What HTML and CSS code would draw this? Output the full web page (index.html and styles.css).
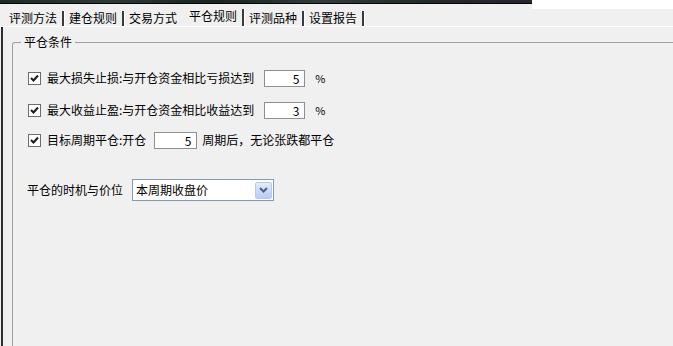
FILE: index.html
```html
<!DOCTYPE html>
<html lang="zh">
<head>
<meta charset="utf-8">
<title>平仓规则</title>
<link rel="stylesheet" href="styles.css">
</head>
<body>
<div class="top">
  <div class="photo"></div>
  <div class="blank"></div>
</div>
<div class="tabs">
  <span class="tab">评测方法</span>
  <span class="tab">建仓规则</span>
  <span class="tab pre-active">交易方式</span>
  <span class="tab active">平仓规则</span>
  <span class="tab">评测品种</span>
  <span class="tab">设置报告</span>
</div>
<div class="tabline"></div>
<div class="panel">
  <fieldset class="group">
    <legend class="legend">平仓条件</legend>
    <div class="rows">
      <div class="row r1">
        <span class="check"><svg width="9" height="9" viewBox="0 0 9 9"><path d="M1 4 L3.5 6.5 L8 1.5" fill="none" stroke="#1a1a1a" stroke-width="2"/></svg></span>
        <span class="label">最大损失止损:与开仓资金相比亏损达到</span>
        <span class="num w41">5</span>
        <span class="pct">%</span>
      </div>
      <div class="row r2">
        <span class="check"><svg width="9" height="9" viewBox="0 0 9 9"><path d="M1 4 L3.5 6.5 L8 1.5" fill="none" stroke="#1a1a1a" stroke-width="2"/></svg></span>
        <span class="label">最大收益止盈:与开仓资金相比收益达到</span>
        <span class="num w41">3</span>
        <span class="pct">%</span>
      </div>
      <div class="row r3">
        <span class="check"><svg width="9" height="9" viewBox="0 0 9 9"><path d="M1 4 L3.5 6.5 L8 1.5" fill="none" stroke="#1a1a1a" stroke-width="2"/></svg></span>
        <span class="label">目标周期平仓:开仓</span>
        <span class="num w43">5</span>
        <span class="after">周期后，无论张跌都平仓</span>
      </div>
      <div class="row r4">
        <span class="label2">平仓的时机与价位</span>
        <span class="select">
          <span class="sel-text">本周期收盘价</span>
          <span class="sel-btn"><svg width="9" height="6" viewBox="0 0 9 6"><path d="M1 1 L4.5 4.5 L8 1" fill="none" stroke="#4d6185" stroke-width="2"/></svg></span>
        </span>
      </div>
    </div>
  </fieldset>
</div>
</body>
</html>
```
FILE: styles.css
```css
html, body {
  margin: 0;
  padding: 0;
}
body {
  width: 673px;
  height: 346px;
  overflow: hidden;
  background: #f0f0f0;
  font-family: "Noto Sans CJK SC", "Noto Sans", sans-serif;
  font-size: 12px;
  color: #000;
}
.top {
  display: flex;
  align-items: flex-start;
  height: 9px;
}
.photo {
  width: 532px;
  height: 3px;
  background: linear-gradient(90deg, #1d2a25 0%, #2c3a36 20%, #1a2420 40%, #2f3b3a 60%, #232a2b 80%, #2b2330 100%);
  border-bottom: 1px solid #050505;
}
.blank {
  flex: 1;
  height: 9px;
  background: #fff;
}
.tabs {
  display: flex;
  align-items: flex-end;
  height: 17px;
  padding-left: 9px;
}
.tab {
  display: flex;
  align-items: center;
  height: 14px;
  line-height: 14px;
  padding-right: 5px;
  margin-right: 5px;
  border-right: 2px solid #3a3a3a;
  box-shadow: 1px 0 0 #ffffff;
  padding-bottom: 1px;
  white-space: nowrap;
}
.tab.pre-active {
  border-right-color: transparent;
  box-shadow: none;
}
.tab.active {
  padding-bottom: 3px;
}
.tabline {
  height: 1px;
  background: #ffffff;
}
.panel {
  margin-left: 1px;
  border-left: 2px solid #2e2e2e;
  padding-left: 9px;
  padding-top: 7px;
  height: 319px;
  box-sizing: border-box;
}
.group {
  margin: 0;
  padding: 0;
  height: 100%;
  min-width: 0;
  border: 1px solid #a0a0a0;
  border-right: none;
  border-bottom: none;
  border-top-left-radius: 3px;
  box-sizing: border-box;
}
.legend {
  margin-left: 8px;
  padding: 0 3px;
  line-height: 16px;
  height: 16px;
}
.rows {
  padding-top: 18px;
}
.row {
  display: flex;
  align-items: center;
  white-space: nowrap;
}
.r1 { height: 20px; padding-left: 15px; }
.r2 { height: 20px; padding-left: 15px; margin-top: 12px; }
.r3 { height: 20px; padding-left: 15px; margin-top: 10px; }
.r4 { height: 22px; padding-left: 14px; margin-top: 29px; }
.check {
  width: 11px;
  height: 11px;
  border: 1px solid #6d6d6d;
  background: #fff;
  display: flex;
  align-items: center;
  justify-content: center;
  margin-right: 6px;
}
.label, .label2, .after {
  line-height: 16px;
}
.num {
  height: 17px;
  box-sizing: border-box;
  border: 1px solid #8e8f8f;
  background: #fff;
  text-align: right;
  padding-right: 5px;
  line-height: 15px;
}
.w41 { width: 41px; margin-left: 10px; }
.w43 { width: 43px; margin-left: 8px; }
.pct {
  margin-left: 10px;
  font-size: 11px;
}
.after {
  margin-left: 5px;
}
.select {
  margin-left: 9px;
  width: 142px;
  height: 22px;
  box-sizing: border-box;
  border: 1px solid #7f9db9;
  background: #fff;
  display: flex;
  align-items: center;
  justify-content: space-between;
  padding: 0 1px 0 3px;
}
.sel-text {
  line-height: 16px;
}
.sel-btn {
  width: 17px;
  height: 17px;
  box-sizing: border-box;
  border: 1px solid #b5c9ee;
  border-radius: 2px;
  background: linear-gradient(180deg, #e3ecfd 0%, #c6d7f8 60%, #b9cdf5 100%);
  display: flex;
  align-items: center;
  justify-content: center;
}
```
